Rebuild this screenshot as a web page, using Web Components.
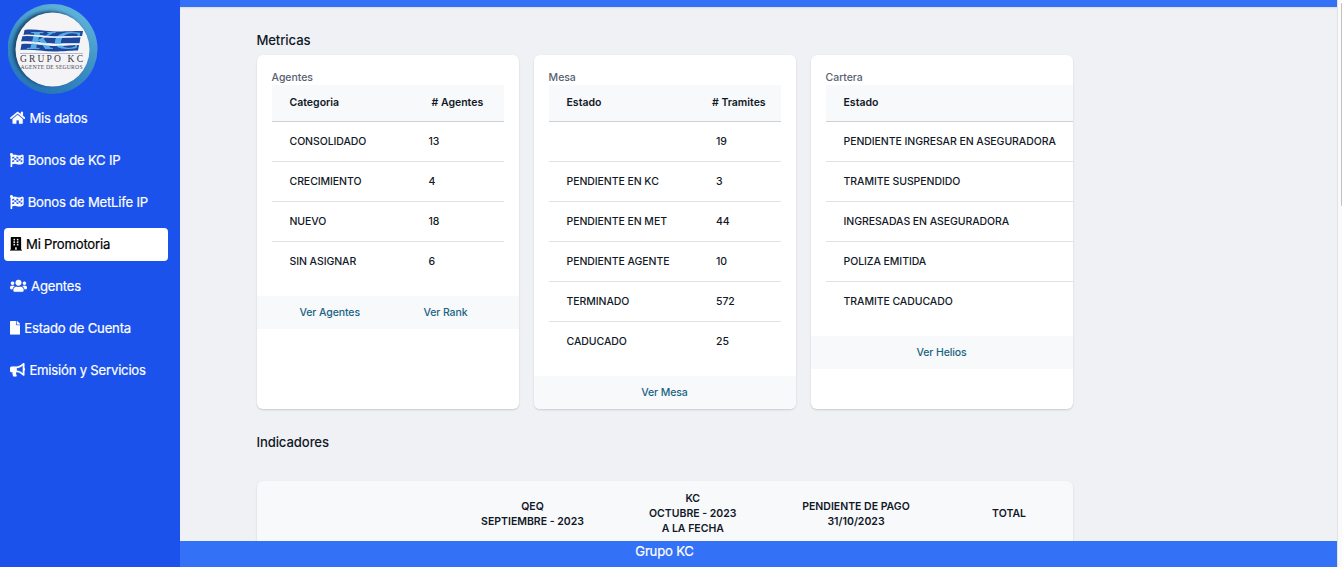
<!DOCTYPE html>
<html lang="es">
<head>
<meta charset="utf-8">
<title>Grupo KC</title>
<style>
html,body{margin:0;height:100%;overflow:hidden}
body{font-family:Inter,"Liberation Sans",sans-serif;background:#f0f1f5;color:#111827}
</style>
</head>
<body>
<kc-app></kc-app>
<script>
const define=(name,html)=>customElements.define(name,class extends HTMLElement{
  connectedCallback(){
    if(this.shadowRoot)return;
    const t=document.createElement('template');
    t.innerHTML=typeof html==='function'?html(this):html;
    this.attachShadow({mode:'open'}).append(t.content.cloneNode(true));
  }
});

const win=(x,y)=>`M${x+12} ${y}h40a12 12 0 0 1 12 12v40a12 12 0 0 1-12 12h-40a12 12 0 0 1-12-12v-40a12 12 0 0 1 12-12z`;
const ICONS={
home:[576,'M280.37 148.26L96 300.11V464a16 16 0 0 0 16 16l112.06-.29a16 16 0 0 0 15.92-16V368a16 16 0 0 1 16-16h64a16 16 0 0 1 16 16v95.64a16 16 0 0 0 16 16.05L464 480a16 16 0 0 0 16-16V300L295.67 148.26a12.19 12.19 0 0 0-15.3 0zM571.6 251.47L488 182.56V44.05a12 12 0 0 0-12-12h-56a12 12 0 0 0-12 12v72.61L318.47 43a48 48 0 0 0-61 0L4.34 251.47a12 12 0 0 0-1.6 16.9l25.5 31A12 12 0 0 0 45.15 301l235.22-193.74a12.19 12.19 0 0 1 15.3 0L530.9 301a12 12 0 0 0 16.9-1.6l25.5-31a12 12 0 0 0-1.7-16.93z'],
flag:[512,'M56 0a56 56 0 0 1 50 80c28-11 58-16 85-16 65 0 100 32 154 32 42 0 74-14 104-26 29-12 63 7 63 42v240c0 16-8 31-21 40-39 26-84 42-141 42-66 0-105-32-158-32-38 0-78 8-112 22v104a24 24 0 0 1-24 24H48a24 24 0 0 1-24-24V102A56 56 0 0 1 56 0zM80 152v64c29-12 53-19 80-22v-66c-32 3-54 11-80 24zm160-18v68c28 4 52 15 80 20v-66c-29-4-52-17-80-22zm160 18v68c25-4 42-11 64-21v-68c-22 9-41 17-64 21zM160 194v68c30-4 55-3 80 2v-62c-29-6-52-10-80-8zm160 28v66c27 6 51 5 80 0v-68c-28 5-51 6-80 2zM80 282v66c26-9 52-15 80-18v-68c-29 4-54 11-80 20zm160-18v68c28 6 52 15 80 20v-64c-29-6-52-19-80-24zm160 24v68c24-4 43-12 64-23v-68c-22 11-41 19-64 23z'],
building:[448,'M436 480h-20V24c0-13.255-10.745-24-24-24H56C42.745 0 32 10.745 32 24v456H12c-6.627 0-12 5.373-12 12v20h448v-20c0-6.627-5.373-12-12-12zM192 480V396a12 12 0 0 1 12-12h40a12 12 0 0 1 12 12v84h-64z'+win(128,64)+win(256,64)+win(128,160)+win(256,160)+win(128,256)+win(256,256)],
users:[640,'M96 224c35.3 0 64-28.7 64-64s-28.7-64-64-64-64 28.7-64 64 28.7 64 64 64zm448 0c35.3 0 64-28.7 64-64s-28.7-64-64-64-64 28.7-64 64 28.7 64 64 64zm32 32h-64c-17.6 0-33.5 7.1-45.1 18.6 40.3 22.1 68.9 62 75.1 109.4h66c17.7 0 32-14.3 32-32v-32c0-35.3-28.7-64-64-64zm-256 0c61.9 0 112-50.1 112-112S381.9 32 320 32 208 82.1 208 144s50.1 112 112 112zm76.8 32h-8.3c-20.8 10-43.9 16-68.5 16s-47.6-6-68.5-16h-8.3C179.6 288 128 339.6 128 403.2V432c0 26.5 21.5 48 48 48h288c26.5 0 48-21.5 48-48v-28.8c0-63.6-51.6-115.2-115.2-115.2zm-223.7-13.4C161.5 263.1 145.6 256 128 256H64c-35.3 0-64 28.7-64 64v32c0 17.7 14.3 32 32 32h65.9c6.3-47.4 34.9-87.3 75.2-109.4z'],
file:[384,'M224 136V0H24C10.7 0 0 10.7 0 24v464c0 13.3 10.7 24 24 24h336c13.3 0 24-10.7 24-24V160H248c-13.2 0-24-10.8-24-24zm160-14.1v6.1H256V0h6.1c6.4 0 12.5 2.5 17 7l97.9 98c4.5 4.5 7 10.6 7 16.9z'],
bullhorn:[576,'M576 240c0-23.63-12.95-44.04-32-55.12V32.01C544 23.26 537.02 0 512 0c-7.12 0-14.19 2.38-19.98 7.02l-85.03 68.03C364.28 109.19 310.66 128 256 128H64c-35.35 0-64 28.65-64 64v96c0 35.35 28.65 64 64 64h33.7c-1.39 10.48-2.18 21.14-2.18 32 0 39.77 9.26 77.35 25.56 110.94 5.19 10.69 16.52 17.06 28.4 17.06h74.28c26.05 0 41.69-29.84 25.9-50.56-16.4-21.52-26.15-48.36-26.15-77.44 0-11.11 1.62-21.79 4.41-32H256c54.66 0 108.28 18.81 150.98 52.95l85.03 68.03a32.023 32.023 0 0 0 19.98 7.02c24.92 0 32-22.78 32-32V295.13C563.05 284.04 576 263.63 576 240zm-96 141.42l-33.05-26.44C392.95 311.78 325.12 288 256 288v-96c69.12 0 136.95-23.78 190.95-66.98L480 98.58v282.84z']
};

define('kc-icon',el=>{const [w,d]=ICONS[el.getAttribute('name')];return `
<style>:host{display:block;flex:none}svg{display:block;height:13.6px;width:${w/512*13.6}px}</style>
<svg viewBox="0 0 ${w} 512"><path fill="currentColor" stroke="currentColor" stroke-width="6" fill-rule="evenodd" d="${d}"/></svg>`});

define('kc-logo',`
<style>:host{display:block;width:90px;height:90px}svg{display:block}</style>
<svg width="90" height="90" viewBox="0 0 90 90">
<defs>
<linearGradient id="ring" x1="0.75" y1="0" x2="0.3" y2="1"><stop offset="0" stop-color="#62b6dc"/><stop offset=".5" stop-color="#3d92c6"/><stop offset="1" stop-color="#2673b5"/></linearGradient>
<filter id="soft" x="-20%" y="-20%" width="140%" height="140%"><feGaussianBlur stdDeviation="1.5"/></filter>
</defs>
<circle cx="44.500" cy="45" r="45" fill="url(#ring)"/>
<circle cx="42" cy="44.500" r="37.500" fill="#123f64" filter="url(#soft)" opacity=".85"/>
<circle cx="44.500" cy="45.500" r="37" fill="#f4f4f7"/>
<path fill="#1d479d" d="M16.500 26c11-1.500 20 1.500 30 1.500S64 27 75 27l-1 5.500c-11-.5-17 0-27 0s-20-2.500-31.500-1.500zM14.500 32c12-1.500 21 1.500 32 1.500s17 0 26-.5l-1 6.500c-10-.5-15 0-25 0-11 0-21-3-33.500-2zM13.500 40c12-1 21 2 32 2s16-1 25.500-1l-1 5.500c-9 0-14 1-24.500 1s-21-2.500-33-1.500z"/>
<text x="19" y="45" font-family="Liberation Serif,serif" font-style="italic" font-weight="bold" font-size="25" textLength="53" lengthAdjust="spacingAndGlyphs" fill="#65bff0" opacity=".85">KC</text>
<path fill="none" stroke="#f4f4f7" stroke-width="1.400" d="M14 31.600c12-1 21 1.500 32 1.500s18-.5 28-.5M13 38.500c12-1 21 2.300 33 2.300 10 0 17-.7 27-.7"/>
<path stroke="#8295b8" stroke-width=".6" d="M12 49.500h63"/>
<text x="12" y="58" font-family="Liberation Serif,serif" font-size="9.500" textLength="63" fill="#34363c">GRUPO KC</text>
<text x="12.500" y="64.800" font-family="Liberation Serif,serif" font-size="5.600" textLength="62" fill="#44474f">AGENTE DE SEGUROS</text>
</svg>`);

define('nav-item',el=>`
<style>
:host{display:flex;align-items:center;box-sizing:border-box;height:33px;margin:0 12px 9px 4px;padding:0 0 1px 6px;gap:4.100px;border-radius:4px;font-size:13.125px;line-height:20px;letter-spacing:-.2px;color:#fff;white-space:nowrap;-webkit-text-stroke:.2px currentColor}
:host([active]){background:#fff;color:#000}
</style>
<kc-icon name="${el.getAttribute('icon')}"></kc-icon><slot></slot>`);

define('kc-sidebar',`
<style>:host{display:block;width:180px;height:100%;background:#1a52eb;flex:none}kc-logo{padding:4px 0 8px 8px}</style>
<kc-logo></kc-logo>
<nav>
<nav-item icon="home">Mis datos</nav-item>
<nav-item icon="flag">Bonos de KC IP</nav-item>
<nav-item icon="flag">Bonos de MetLife IP</nav-item>
<nav-item icon="building" active>Mi Promotoria</nav-item>
<nav-item icon="users">Agentes</nav-item>
<nav-item icon="file">Estado de Cuenta</nav-item>
<nav-item icon="bullhorn">Emisión y Servicios</nav-item>
</nav>`);

define('metric-row',`
<style>
:host{display:grid;grid-template-columns:var(--c1,139px) 1fr;align-items:center;box-sizing:border-box;height:40px;padding-left:17.5px;border-bottom:1px solid #e0e3e6;font-size:10.5px;line-height:15px;font-weight:500;letter-spacing:-.07px;white-space:nowrap}
:host([last]){height:39px;border-bottom:0}
:host([head]){height:37px;background:#f8f9fb;border-bottom-color:#ccd1d6;font-weight:600;letter-spacing:0;padding-bottom:2px;grid-template-columns:var(--h1,142px) 1fr}
</style>
<slot name="a"><span></span></slot><slot name="b"></slot>`);

define('metric-card',el=>`
<style>
:host{display:block;width:262px;height:354px;background:#fff;border-radius:6px;overflow:hidden;box-shadow:0 1px 2px rgba(0,0,0,.16);font-weight:500}
.body{padding:15px}
h3{margin:0 0 0 -.4px;font-size:10.5px;line-height:15px;font-weight:500;letter-spacing:-.06px;color:#596172}
.foot{display:flex;justify-content:center;gap:63.500px;height:33px;line-height:33px;background:#f8f9fb;color:#186482;font-size:10.5px;letter-spacing:-.1px;padding-right:var(--foot-pad,1px)}
.table{width:var(--tw,232px)}
</style>
<div class="body"><h3>${el.getAttribute('heading')}</h3><div class="table"><slot></slot></div></div>
<div class="foot"><slot name="link"></slot></div>`);

const rows=list=>list.map(([a,b],i)=>`<metric-row${i?'':' head'}${i===list.length-1?' last':''}><span slot="a">${a}</span><span slot="b">${b}</span></metric-row>`).join('');

define('indicator-table',`
<style>
:host{display:grid;grid-template-columns:195px 161px 159.500px 167px 139px;align-items:center;box-sizing:border-box;width:816px;height:90px;padding-bottom:26px;background:#f8f9fb;border-radius:6px 6px 0 0;box-shadow:0 1px 2px rgba(0,0,0,.16);font-size:10.5px;line-height:15px;font-weight:600;text-align:center}
.two{padding-top:1px}
</style>
<span></span><span class="two">QEQ<br>SEPTIEMBRE - 2023</span><span>KC<br>OCTUBRE - 2023<br>A LA FECHA</span><span class="two">PENDIENTE DE PAGO<br>31/10/2023</span><span>TOTAL</span>`);

define('kc-dashboard',`
<style>
:host{display:block;flex:1;min-height:0;overflow:hidden;padding:23px 0 0 77px;box-shadow:inset 0 2px 2px -1px rgba(0,0,0,.1)}
h2{margin:0 0 5px -.6px;font-size:13.125px;line-height:20px;font-weight:500;letter-spacing:-.1px}
.cards{display:flex;gap:15px;margin-bottom:23px}
.second{margin-bottom:29px}
.agentes{--foot-pad:9px}
.mesa{--c1:149.5px;--h1:145.5px}
.cartera{--tw:310px;--c1:240px;--h1:240px}
</style>
<h2>Metricas</h2>
<div class="cards">
<metric-card class="agentes" heading="Agentes">${rows([['Categoria','# Agentes'],['CONSOLIDADO','13'],['CRECIMIENTO','4'],['NUEVO','18'],['SIN ASIGNAR','6']])}<span slot="link">Ver Agentes</span><span slot="link">Ver Rank</span></metric-card>
<metric-card class="mesa" heading="Mesa">${rows([['Estado','# Tramites'],['','19'],['PENDIENTE EN KC','3'],['PENDIENTE EN MET','44'],['PENDIENTE AGENTE','10'],['TERMINADO','572'],['CADUCADO','25']])}<span slot="link">Ver Mesa</span></metric-card>
<metric-card class="cartera" heading="Cartera">${rows([['Estado',''],['PENDIENTE INGRESAR EN ASEGURADORA',''],['TRAMITE SUSPENDIDO',''],['INGRESADAS EN ASEGURADORA',''],['POLIZA EMITIDA',''],['TRAMITE CADUCADO','']])}<span slot="link">Ver Helios</span></metric-card>
</div>
<h2 class="second">Indicadores</h2>
<indicator-table></indicator-table>`);

define('kc-footer',`
<style>:host{display:block;box-sizing:border-box;height:26px;background:#3371f6;color:#fff;font-size:13.125px;line-height:21px;letter-spacing:-.2px;padding-left:455.300px;-webkit-text-stroke:.2px currentColor}</style><slot></slot>`);

define('scroll-track',`
<style>:host{display:block;box-sizing:border-box;width:5px;flex:none;background:#fafafa;border-left:1px solid #e3e3e6;padding:3px 0 0 3px}div{height:203px;background:#c1c1c1;border-radius:3px 0 0 3px}</style><div></div>`);

define('kc-app',`
<style>
:host{display:flex;width:1342px;height:567px;overflow:hidden}
main{display:flex;flex-direction:column;flex:1;min-width:0}
.top{height:7px;background:#3371f6;flex:none}
</style>
<kc-sidebar></kc-sidebar>
<main><div class="top"></div><kc-dashboard></kc-dashboard><kc-footer>Grupo KC</kc-footer></main>
<scroll-track></scroll-track>`);
</script>
</body>
</html>
